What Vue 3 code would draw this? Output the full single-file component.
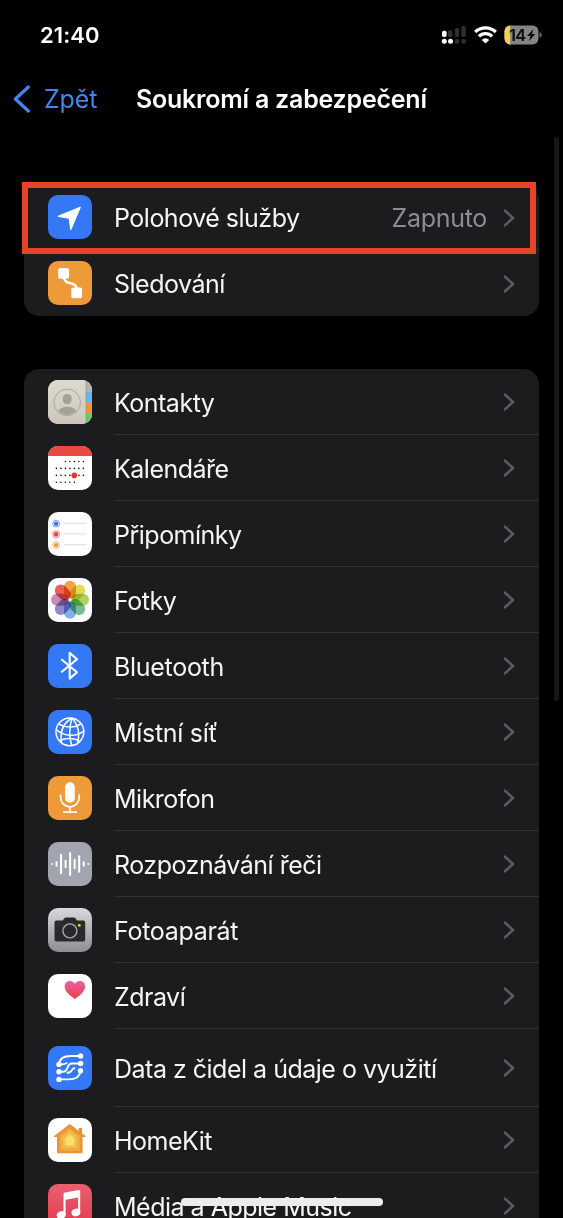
<script setup>
const privacyRows = [
  { icon: 'location', label: 'Polohové služby', value: 'Zapnuto' },
  { icon: 'tracking', label: 'Sledování' },
]

const appRows = [
  { icon: 'contacts', label: 'Kontakty' },
  { icon: 'calendar', label: 'Kalendáře' },
  { icon: 'reminders', label: 'Připomínky' },
  { icon: 'photos', label: 'Fotky' },
  { icon: 'bluetooth', label: 'Bluetooth', loose: true },
  { icon: 'network', label: 'Místní síť', loose: true },
  { icon: 'microphone', label: 'Mikrofon' },
  { icon: 'speech', label: 'Rozpoznávání řeči' },
  { icon: 'camera', label: 'Fotoaparát', loose: true },
  { icon: 'health', label: 'Zdraví' },
  { icon: 'sensors', label: 'Data z čidel a údaje o využití', tall: true },
  { icon: 'home', label: 'HomeKit' },
  { icon: 'music', label: 'Média a Apple Music' },
]

const groups = [
  { id: 'privacy', rows: privacyRows, highlight: true },
  { id: 'apps', rows: appRows },
]

const dotColumns = [8.4, 12.9, 17.4, 21.9, 26.4, 30.9, 35.4]
const calendarDots = [
  ...dotColumns.slice(2).map((x) => ({ x, y: 15.5 })),
  ...dotColumns.map((x) => ({ x, y: 22.4 })),
  ...dotColumns.map((x) => ({ x, y: 29.4 })),
  ...dotColumns.slice(0, 5).map((x) => ({ x, y: 36.3 })),
]

const reminders = [
  { y: 11.7, color: '#3478f6' },
  { y: 22.3, color: '#e8453a' },
  { y: 33.1, color: '#f09a37' },
]

const petals = ['#f0a24c', '#e6db52', '#aed162', '#74bd94', '#82b0e0', '#8f8bc9', '#c78bbb', '#ea6156']

const waveHeights = [2, 5.4, 20.6, 8.6, 24, 10.6, 17.4, 5.4, 2]
</script>

<template>
  <div class="screen">
    <header class="status">
      <span class="time">21:40</span>
      <div class="indicators">
        <svg class="signal" width="26" height="20" viewBox="0 0 26 20">
          <g fill="#2f2f31">
            <rect x="8" y="5.3" width="4.4" height="6.6" rx="1.6" />
            <rect x="14.8" y="3" width="4.4" height="8.9" rx="1.6" />
            <rect x="21.4" y="1" width="4.4" height="10.9" rx="1.6" />
            <circle cx="17" cy="16.4" r="2.3" />
            <circle cx="23.6" cy="16.4" r="2.3" />
          </g>
          <g fill="#fff">
            <rect x="2" y="5.8" width="4.6" height="6.2" rx="1.8" />
            <circle cx="4.3" cy="16.3" r="2.5" />
            <circle cx="10.5" cy="16.3" r="2.5" />
          </g>
        </svg>
        <svg class="wifi" width="23" height="18" viewBox="0 0 23 18">
          <g fill="none" stroke="#fff" stroke-width="3.3">
            <path d="M1.2 6a14.8 14.8 0 0 1 20.6 0" />
            <path d="M4.9 10.3a9.4 9.4 0 0 1 13.2 0" />
          </g>
          <path d="M11.5 17.6L7.8 13.9a5.2 5.2 0 0 1 7.4 0Z" fill="#fff" />
        </svg>
        <svg class="battery" width="38" height="20" viewBox="0 0 38 20">
          <defs>
            <clipPath id="cell"><rect x=".5" y=".5" width="34" height="19" rx="6" /></clipPath>
          </defs>
          <g clip-path="url(#cell)">
            <rect width="35" height="20" fill="#858587" />
            <rect width="6.2" height="20" fill="#f5cf52" />
          </g>
          <path d="M35.6 7.2c2.8.8 2.8 4.8 0 5.6Z" fill="#707072" />
          <text x="5" y="15.6" textLength="17">14</text>
          <path d="M29.4 4L23 11h3.4L25 16.3 31.3 9H28Z" fill="#111" />
        </svg>
      </div>
    </header>

    <nav class="navbar">
      <div class="back">
        <svg width="18" height="28" viewBox="0 0 18 28">
          <path d="M16.4 2L3.4 14l13 12" fill="none" stroke="#4384ee" stroke-width="3.3" stroke-linecap="round" stroke-linejoin="round" />
        </svg>
        <span>Zpět</span>
      </div>
      <h1>Soukromí a zabezpečení</h1>
    </nav>

    <main class="groups">
      <section v-for="group in groups" :key="group.id" class="group">
        <div v-for="row in group.rows" :key="row.icon" class="row" :class="{ tall: row.tall }">
          <svg class="icon" :class="row.icon" width="44" height="44" viewBox="0 0 44 44">
            <path v-if="row.icon === 'location'" d="M32.2 12.3L22.8 34.6 21.2 23.1 10.2 21.3Z" fill="#fff" stroke="#fff" stroke-width="1.2" stroke-linejoin="round" />

            <g v-else-if="row.icon === 'tracking'">
              <path d="M16 16.5c0 8.2 12.8 3.4 12.8 11.5" fill="none" stroke="#fff" stroke-width="2.5" />
              <rect x="10.2" y="7" width="10.8" height="10.8" rx="2" fill="#fff" />
              <rect x="23.3" y="26.4" width="10.8" height="10.8" rx="2" fill="#fff" />
            </g>

            <g v-else-if="row.icon === 'contacts'">
              <defs>
                <clipPath id="portrait"><circle cx="19.2" cy="22.4" r="12.3" /></clipPath>
                <linearGradient id="paper" x2="0" y2="1">
                  <stop stop-color="#dcdacf" />
                  <stop offset="1" stop-color="#cbc8bb" />
                </linearGradient>
              </defs>
              <rect width="44" height="44" fill="url(#paper)" />
              <rect x="38" width="6" height="11.6" fill="#b7b4a8" />
              <rect x="38" y="11.6" width="6" height="11" fill="#67b5f3" />
              <rect x="38" y="22.6" width="6" height="11.3" fill="#ec963a" />
              <rect x="38" y="33.9" width="6" height="10.1" fill="#63ca68" />
              <path d="M38 0v44" stroke="#8f8c81" stroke-width=".6" />
              <circle cx="19.2" cy="22.4" r="13.3" fill="none" stroke="#a4a197" stroke-width=".9" />
              <g clip-path="url(#portrait)" fill="#a4a197">
                <ellipse cx="19.2" cy="19" rx="4.6" ry="5.2" />
                <ellipse cx="19.2" cy="34" rx="10.5" ry="7.2" />
              </g>
            </g>

            <g v-else-if="row.icon === 'calendar'">
              <rect width="44" height="10" fill="#e9493e" />
              <circle v-for="(dot, i) in calendarDots" :key="i" :cx="dot.x" :cy="dot.y" r=".8" fill="#111" />
              <circle cx="26.3" cy="29.4" r="2.8" fill="#e03a30" />
            </g>

            <g v-else-if="row.icon === 'reminders'">
              <g v-for="item in reminders" :key="item.y">
                <circle cx="8.1" :cy="item.y" r="3.4" fill="none" :stroke="item.color" stroke-width=".7" />
                <circle cx="8.1" :cy="item.y" r="2.2" :fill="item.color" />
                <path :d="`M16 ${item.y - 0.4}h22.4`" stroke="#d6d6d8" stroke-width=".8" />
              </g>
            </g>

            <g v-else-if="row.icon === 'photos'">
              <rect
                v-for="(color, i) in petals"
                :key="color"
                class="petal"
                x="16"
                y="2.8"
                width="12"
                height="17.6"
                rx="6"
                :fill="color"
                :transform="`rotate(${i * 45} 22 21.8)`"
              />
            </g>

            <path v-else-if="row.icon === 'bluetooth'" d="M13.9 15.8L29 28.2l-7.3 6.4V8.800L29 15.2 13.9 27.8" fill="none" stroke="#fff" stroke-width="2.1" stroke-linecap="round" stroke-linejoin="round" />

            <g v-else-if="row.icon === 'network'" fill="none" stroke="#fff" stroke-width="1.5">
              <circle cx="21.9" cy="21.8" r="13.9" />
              <path d="M24 8c-7 4-12.5 12-10.5 25" />
              <path d="M24 8c-2.5 8-3.5 17-.3 27.5" />
              <path d="M24 8c5.5 6 8.5 14 5.5 25.3" />
              <path d="M10.5 14c7 4 16 4.5 22.8-.6" />
              <path d="M8.2 19.5c8 7.5 20.5 7.5 27.5 1.5" />
              <path d="M11.5 30.8c6-3.5 15-3 20.500.5" />
            </g>

            <g v-else-if="row.icon === 'microphone'">
              <rect x="17" y="6.3" width="9.8" height="20.5" rx="4.9" fill="#fff" />
              <path d="M12.6 19v2.5a9.3 9.3 0 0 0 18.6 0V19M21.9 30.8v5.2M15.7 36.2h12.6" fill="none" stroke="#fff" stroke-width="1.7" stroke-linecap="round" />
            </g>

            <g v-else-if="row.icon === 'speech'">
              <rect v-for="(h, i) in waveHeights" :key="i" :x="3 + i * 4.53" :y="22 - h / 2" width="2" :height="h" rx="1" fill="#fff" />
            </g>

            <g v-else-if="row.icon === 'camera'">
              <path d="M8.5 12.6h5.4c1.8 0 1.8-3.2 4-3.2h8c2.2 0 2.2 3.2 4 3.2h5.4c1.2 0 1.9.8 1.9 1.9v16.9c0 1.200-.7 2-1.9 2H8.5c-1.200 0-2-.8-2-2V14.5c0-1.100.8-1.900 2-1.900Z" fill="#29292b" />
              <path d="M6.5 17h30.7" stroke="#414143" stroke-width=".5" />
              <circle cx="21.9" cy="22.9" r="7" fill="#29292b" stroke="#aaa9ad" stroke-width="1.4" />
              <circle cx="31.3" cy="17.4" r="1.4" fill="#f2d24a" />
            </g>

            <g v-else-if="row.icon === 'health'">
              <defs>
                <linearGradient id="heart" x2="0" y2="1">
                  <stop stop-color="#e95fae" />
                  <stop offset="1" stop-color="#ef4034" />
                </linearGradient>
              </defs>
              <path d="M26.9 25c-4.2-2.9-10.3-7.3-10.3-12.5 0-3.3 2.3-5.5 5.2-5.5 2.2 0 4 1 5.1 2.7C28 8 29.7 7 32 7c2.9 0 5.1 2.2 5.1 5.5 0 5.2-6 9.6-10.2 12.5Z" fill="url(#heart)" />
            </g>

            <g v-else-if="row.icon === 'sensors'">
              <g fill="none" stroke="#fff" stroke-width="1.9" stroke-linecap="round">
                <path d="M32.6 10H23c-7 0-11.500 3-12 8.300" />
                <path d="M32.6 17.500H24c-6.500 0-2.500 8.200-9 8.200h-4" />
                <path d="M11 18.400c4.500 0 6.500 0 7.500-1.400" />
                <path d="M32.500 24.800c-.6 5.500-5 8.600-12 8.600H11" />
                <path d="M19.500 26.800c5.500 0 3.500-4.500 7-4.500" />
              </g>
              <g fill="#fff">
                <circle cx="32.600" cy="10" r="2.700" />
                <circle cx="11" cy="18.400" r="2.700" />
                <circle cx="32.600" cy="17.500" r="2.700" />
                <circle cx="11" cy="25.700" r="2.700" />
                <circle cx="32.500" cy="24.800" r="2.700" />
                <circle cx="11" cy="33.400" r="2.700" />
              </g>
            </g>

            <g v-else-if="row.icon === 'home'" stroke-linejoin="round">
              <path d="M30.800 10h3.200v8h-3.200Z" fill="#e58f35" />
              <path d="M21.800 6.800L6.400 18.400h3.200v16.300h24.400V18.400h3.200Z" fill="#e8953a" stroke="#e8953a" stroke-width="1.200" />
              <path d="M21.800 10.300L11.600 18v15h20.400V18Z" fill="#efa940" />
              <path d="M21.800 13.300l-6.900 5.200v11.300h13.800V18.500Z" fill="#f3bd4c" stroke="#f3bd4c" />
              <path d="M21.800 17l-4 3v7h8v-7Z" fill="#f8e06c" stroke="#f8e06c" />
            </g>

            <g v-else fill="#fff">
              <path d="M15.500 10.200c0-1 .4-1.600 1.400-1.800L31 5.900c.8-.1 1.200.2 1.200 1v21.300h-2.100V13.400l-12.500 2.400v15.500h-2.100Z" />
              <ellipse cx="13.200" cy="31" rx="4.500" ry="3.700" transform="rotate(-20 13.200 31)" />
              <ellipse cx="27.900" cy="28.500" rx="4.500" ry="3.700" transform="rotate(-20 27.900 28.500)" />
            </g>
          </svg>

          <div class="content">
            <span class="label" :class="{ loose: row.loose }">{{ row.label }}</span>
            <span v-if="row.value" class="value">{{ row.value }}</span>
            <svg class="chevron" width="12" height="18" viewBox="0 0 12 18">
              <path d="M2 1.700L10 9 2 16.300" fill="none" stroke="#5b5b5f" stroke-width="2.600" stroke-linecap="round" stroke-linejoin="round" />
            </svg>
          </div>
        </div>
        <div v-if="group.highlight" class="highlight"></div>
      </section>
    </main>

    <div class="scrollbar"></div>
    <div class="home-indicator"></div>
  </div>
</template>

<style>
body {
  background: #000;
}
</style>

<style scoped>
.screen {
  position: relative;
  width: 563px;
  height: 1218px;
  overflow: hidden;
  box-sizing: border-box;
  background: #000;
  color: #f5f5f7;
  font-family: Inter, "Liberation Sans", sans-serif;
  font-size: 25px;
  line-height: 30px;
}

.status {
  display: flex;
  justify-content: space-between;
  align-items: center;
  height: 69px;
  padding: 0 21px 0 40px;
}

.time {
  font-size: 22px;
  font-weight: 600;
  letter-spacing: 0.1px;
  color: #fff;
}

.indicators {
  display: flex;
  align-items: center;
}

.signal {
  margin-right: 8px;
}

.wifi {
  margin-right: 7px;
}

.battery text {
  font-size: 16px;
  font-weight: 700;
  fill: #111;
}

.navbar {
  display: grid;
  grid-template-columns: 136px 1fr;
  align-items: center;
  height: 60px;
}

.back {
  display: flex;
  align-items: center;
  gap: 14px;
  padding-left: 12px;
  color: #4384ee;
  letter-spacing: -0.1px;
}

h1 {
  margin: 0;
  font-size: 25px;
  font-weight: 600;
  line-height: 30px;
  letter-spacing: -0.23px;
  white-space: nowrap;
  color: #fff;
}

.groups {
  display: flex;
  flex-direction: column;
  gap: 52.6px;
  padding: 55px 24px 0;
}

.group {
  position: relative;
  width: 515px;
  border-radius: 15px;
  background: #1c1c1e;
}

.row {
  display: flex;
  align-items: center;
  gap: 22px;
  height: 66px;
  padding-left: 24px;
}

.row.tall {
  height: 78px;
}

.content {
  display: flex;
  flex: 1;
  align-items: center;
  align-self: stretch;
  box-sizing: border-box;
  padding-right: 24px;
  border-bottom: 1px solid #323235;
}

.row:nth-last-child(1 of .row) .content {
  border-bottom-color: transparent;
}

.label,
.value {
  padding-top: 3px;
  letter-spacing: -0.5px;
  white-space: nowrap;
}

.label {
  flex: 1;
}

.label.loose {
  letter-spacing: -0.3px;
}

.value {
  margin-right: 16px;
  letter-spacing: -0.3px;
  color: #8d8d93;
}

.chevron {
  flex: none;
  margin-top: 2px;
}

.icon {
  flex: none;
  border-radius: 10px;
  background: #fff;
}

.location,
.bluetooth,
.network,
.sensors {
  background: #3478f6;
}

.tracking,
.microphone {
  background: #ef9a38;
}

.speech {
  background: #a2a5b0;
}

.camera {
  background: linear-gradient(#d9d8dd, #8e8d92);
}

.music {
  background: linear-gradient(#e9606f, #e33950);
}

.photos g {
  isolation: isolate;
}

.petal {
  mix-blend-mode: multiply;
}

.highlight {
  position: absolute;
  top: -2px;
  left: -2px;
  width: 514px;
  height: 72px;
  box-sizing: border-box;
  border: 6px solid #e94327;
}

.scrollbar {
  position: absolute;
  top: 137px;
  right: 4px;
  width: 5px;
  height: 564px;
  border-radius: 3px;
  background: #171718;
}

.home-indicator {
  position: absolute;
  left: 181px;
  bottom: 12px;
  width: 202px;
  height: 8px;
  border-radius: 4px;
  background: #ececed;
}
</style>
